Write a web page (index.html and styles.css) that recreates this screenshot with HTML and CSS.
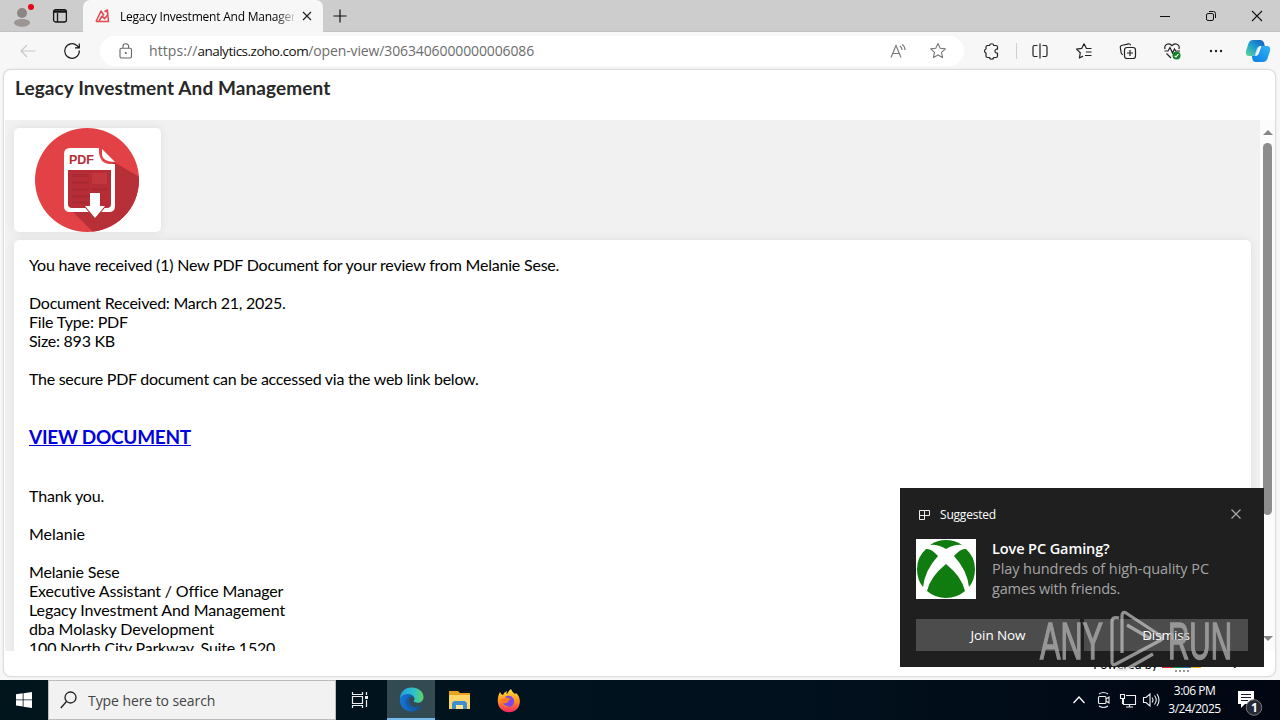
FILE: index.html
```html
<!DOCTYPE html>
<html lang="en">
<head>
<meta charset="utf-8">
<title>Legacy Investment And Management</title>
<link rel="stylesheet" href="styles.css">
</head>
<body>
<div class="desktop">
  <header class="titlebar">
    <div class="title-tools">
      <svg class="profile" width="24" height="26" viewBox="0 0 24 26"><circle cx="12" cy="11" r="5" fill="#8c8583"/><path d="M4 21c0-3 4-4 8-4s8 1 8 4c-2 5-14 5-16 0z" fill="#9c9593"/><circle cx="21" cy="5" r="3" fill="#e30613"/></svg>
      <svg class="tabs-icon" width="16" height="16" viewBox="0 0 16 16" fill="none" stroke="#161616" stroke-width="1.3"><rect x="1.6" y="1.6" width="12.8" height="12.4" rx="2"/><path d="M2 4h12M2 3h12M5.5 5v9"/></svg>
    </div>
    <div class="tab">
      <svg width="16" height="14" viewBox="0 0 16 14" fill="none" stroke="#e5484d" stroke-width="1.500" stroke-linejoin="round"><path d="M1 12.500 6 2l3 4.500M1 12.500h12.500L12.500 3"/><path d="m4 12 3.200-5 2.300 2.800L13 5.500M9.500 2.500 12.500 1v3"/></svg>
      <span class="tab-title">Legacy Investment And Manager</span>
      <svg class="tab-close" width="10" height="10" viewBox="0 0 10 10"><path d="m1 1 8 8m0-8-8 8" stroke="#222" stroke-width="1.200"/></svg>
    </div>
    <svg class="newtab" width="14" height="14" viewBox="0 0 14 14"><path d="M7 .5v13M.5 7h13" stroke="#111" stroke-width="1.200"/></svg>
    <div class="window-controls">
      <svg width="12" height="12" viewBox="0 0 12 12"><path d="M1 6.500h10" stroke="#111"/></svg>
      <svg width="12" height="12" viewBox="0 0 12 12" fill="none" stroke="#111"><rect x="1.500" y="3.500" width="7" height="7" rx="1.500"/><path d="M4 1.500h4.500q2 0 2 2V8"/></svg>
      <svg width="12" height="12" viewBox="0 0 12 12"><path d="m1 1 10 10m0-10L1 11" stroke="#111" stroke-width="1.100"/></svg>
    </div>
  </header>

  <nav class="toolbar">
    <svg class="back" width="16" height="14" viewBox="0 0 16 14" fill="none" stroke="#c8c8c8" stroke-width="1.200"><path d="M15.500 7H1m6-6L1 7l6 6"/></svg>
    <svg class="reload" width="18" height="18" viewBox="0 0 18 18" fill="none" stroke="#1b1b1b" stroke-width="1.200"><path d="M16.300 8.500A7.300 7.300 0 1 1 13.800 3.500L16 5.500M16.300 1.500v4.300H12"/></svg>
    <div class="address">
      <svg class="lock" width="14" height="16" viewBox="0 0 14 16" fill="none" stroke="#666" stroke-width="1.100"><rect x="1" y="5.200" width="11.500" height="9.800" rx="1.500"/><path d="M4 5V3.500a2.800 2.800 0 0 1 5.600 0V5"/><circle cx="6.800" cy="10" r=".5" fill="#555"/></svg>
      <span class="url">https://<b>analytics.zoho.com</b><span class="path">/open-view/3063406000000006086</span></span>
      <svg class="read" width="17" height="16" viewBox="0 0 17 16" fill="none" stroke="#777" stroke-width="1.100"><path d="m1 14.500 5-12 5 12M3 10.500h6M10 3q2 1.500 2 4M12.200 1.400Q15 3.500 15 7"/></svg>
      <svg class="fav" width="18" height="18" viewBox="0 0 18 18" fill="none" stroke="#777" stroke-width="1.100" stroke-linejoin="round"><path d="m9 1.500 2.200 4.800 5.200.6-3.900 3.500 1.100 5.200L9 13l-4.600 2.600 1.100-5.200-3.900-3.500 5.200-.6z"/></svg>
    </div>
    <div class="actions">
      <svg class="ext" width="18" height="18" viewBox="0 0 18 18" fill="none" stroke="#222" stroke-width="1.200" stroke-linejoin="round"><path d="M4.500 3.500h2a2.200 2.200 0 0 1 4.300 0H13q1.500 0 1.500 1.500v2.200h-1.200a2 2 0 0 0 0 3.800h1.200v3q0 1.500-1.500 1.500h-2.200a2.200 2.200 0 0 1-4.300 0h-2Q3 15.500 3 14v-3a2.100 2.100 0 0 1 0-4V5q0-1.500 1.500-1.500z"/></svg>
      <i class="divider"></i>
      <svg width="18" height="18" viewBox="0 0 18 18" fill="none" stroke="#222" stroke-width="1.200"><path d="M9 1.500v15M6.500 3.500H3.500q-1.500 0-1.500 1.500v8q0 1.500 1.500 1.500h3m5-11h3q1.500 0 1.500 1.500v8q0 1.500-1.500 1.500h-3"/></svg>
      <svg width="18" height="18" viewBox="0 0 18 18" fill="none" stroke="#222" stroke-width="1.200" stroke-linejoin="round"><path d="M16.500 6.500h-5L9 1.800 6.700 6.400l-5.200.7 3.800 3.600L4.400 16 8 14.100M11 10h5.500M10 13.500h6.500"/></svg>
      <svg width="18" height="18" viewBox="0 0 18 18" fill="none" stroke="#222" stroke-width="1.200"><rect x="5.500" y="5.500" width="11" height="11" rx="2.500"/><path d="M4 12.500q-1.500 0-1.800-1.500L1.300 5.500Q1 4 2.500 3.500l7-1.700q1.500-.3 2.100 1.600M11 8v6M8 11h6"/></svg>
      <svg width="19" height="18" viewBox="0 0 19 18" fill="none" stroke="#222" stroke-width="1.200"><path d="M2 7.200q-1-3.700 2-5 3-1 5 1.500 2-2.500 5-1.500 3 1.300 2 5M1.500 9H5l2-3.500L9.500 11l2-4 1.200 2H17M3.500 11.500 8 16"/><circle cx="13.500" cy="13.500" r="4" fill="#16812b" stroke="none"/><path d="m11.700 14 1.300 1 2.400-3" stroke="#fff"/></svg>
      <svg width="18" height="18" viewBox="0 0 18 18" fill="#222"><circle cx="3" cy="9" r="1.200"/><circle cx="8" cy="9" r="1.200"/><circle cx="13" cy="9" r="1.200"/></svg>
    </div>
    <svg class="copilot" width="26" height="24" viewBox="0 0 26 24">
      <defs><linearGradient id="ca" x1="0" y1="1" x2="1" y2="0"><stop offset="0" stop-color="#64d894"/><stop offset=".5" stop-color="#1c9ed0"/><stop offset="1" stop-color="#1756bd"/></linearGradient><linearGradient id="cb" x1="0" y1="1" x2="1" y2="0"><stop offset="0" stop-color="#087de6"/><stop offset="1" stop-color="#35b4f4"/></linearGradient></defs>
      <path d="M8 1h7q3 0 4 3l.8 3H16q-3 0-4 3l-1.500 4Q9.500 17 6.500 17H4q-4 0-3-5l2.300-7Q4.500 1 8 1z" fill="url(#ca)"/>
      <path d="M18 23h-7q-3 0-3.600-3L7 17q3 0 4-3l1.500-4Q13.500 7 16.500 7H22q4 0 3 5l-2.300 7Q21.500 23 18 23z" fill="url(#cb)"/><path d="M12.500 10q.8-2.700 3-3h1l-2.500 7q-.8 2.800-3 3h-1z" fill="#f4fbff"/>
    </svg>
  </nav>

  <main class="page">
    <h1 class="page-title"><span>Legacy Investment And Management</span></h1>
    <div class="viewport">
      <div class="dashboard">
        <div class="pdf-card">
          <svg width="104" height="104" viewBox="0 0 104 104">
            <defs><clipPath id="disc"><circle cx="52" cy="52" r="52"/></clipPath></defs>
            <g clip-path="url(#disc)"><path fill="#e24146" d="M0 0h104v104H0z"/><path fill="#b73038" d="m79 34 34 20v60H68L34 80z"/></g>
            <path d="M35 20h29v5q1 10 10 11h6V78q0 6-6 6H35q-6 0-6-6V26q0-6 6-6z" fill="#fff"/>
            <path d="M33 42h43v34q0 4-4 4H37q-4 0-4-4z" fill="#b72d35"/>
            <g fill="#aa2932"><path d="M37 46h17v3H37zM37 53h17v3H37zM37 60h17v3H37zM37 67h17v3H37zM37 73h17v3H37zM57 60h15v3H57z"/></g><path d="M57 45h15v11H57z" fill="#c2363e"/>
            <path d="M67 21 80 34q-12 0-13-7z" fill="#fff"/>
            <path d="M55 65h10v13h5L60 90 50 78h5z" fill="#fff" stroke="#b72d35" stroke-width="2" paint-order="stroke"/>
            <text x="34" y="36" textLength="25" lengthAdjust="spacingAndGlyphs" class="pdf-label">PDF</text>
          </svg>
        </div>
        <article class="message">
          <p><span class="l1">You have received (1) New PDF Document for your review from Melanie Sese.</span></p>
          <p><span class="l2">Document Received: March 21, 2025.</span><br>File Type: PDF<br><span class="l2">Size: 893 KB</span></p>
          <p><span class="l3">The secure PDF document can be accessed via the web link below.</span></p>
          <a class="view" href="#">VIEW DOCUMENT</a>
          <p>Thank you.</p>
          <p class="plain">Melanie</p>
          <p>Melanie Sese<br>Executive Assistant / Office Manager<br><span class="org">Legacy Investment And Management</span><br><span class="org">dba Molasky Development</span><br><span class="l1">100 North City Parkway, Suite 1520</span></p>
        </article>
      </div>
      <div class="scrollbar"><i class="up"></i><i class="thumb"></i><i class="down"></i></div>
    </div>
    <footer class="powered"><span>Powered by</span><svg width="42" height="13" viewBox="0 0 42 13" fill="none" stroke-width="2"><rect x="2" y="0" width="9" height="7" stroke="#e42527"/><rect x="13" y="0" width="7" height="7" stroke="#089949"/><rect x="22" y="0" width="7" height="7" stroke="#226db4"/><rect x="31" y="0" width="8" height="7" stroke="#f9b21d"/><path d="M14 11h16" stroke="#999" stroke-dasharray="2 2"/></svg><b>Analytics</b></footer>
  </main>

  <footer class="taskbar">
    <div class="start"><svg width="16" height="16" viewBox="0 0 16 16" fill="#fff"><path d="m0 2.300 6.700-1v6.200H0zM7.500 1.200 16 0v7.500H7.500zM0 8.300h6.700v6.200l-6.700-1zM7.500 8.300H16V16l-8.500-1.300z"/></svg></div>
    <div class="search"><svg width="17" height="18" viewBox="0 0 17 18" fill="none" stroke="#222" stroke-width="1.300"><circle cx="10.500" cy="6.500" r="5.500"/><path d="M6.500 10.500.8 17"/></svg><span>Type here to search</span></div>
    <div class="task"><svg width="18" height="18" viewBox="0 0 18 18" fill="none" stroke="#eee" stroke-width="1.200"><path d="M1.500 1v2.500h10V1M1.500 17v-2.500h10V17M1.500 5.500h10v7h-10zM15.500 1v3m0 5v7"/><path d="M14 5h3v3h-3z" fill="#eee" stroke="none"/></svg></div>
    <div class="task active"><svg width="25" height="25" viewBox="0 0 25 25"><defs><linearGradient id="ea"><stop stop-color="#239fe5"/><stop offset=".6" stop-color="#2cc1cb"/><stop offset="1" stop-color="#62d45d"/></linearGradient><linearGradient id="eb"><stop stop-color="#1676d2"/><stop offset="1" stop-color="#0c4f9b"/></linearGradient></defs><path d="M1 12C1 5 6 .5 12.500.5 20 .5 24.500 5 24.500 10c0 5-5 7-9 5-2-1 .5-2 0-4C14 7 5 6 1 12z" fill="url(#ea)"/><path d="M1 11C4 6 13 6 15 10c-4-1-6 2-5 5 1 5 7 7 13 3-2 4-6 6.500-10.500 6.500C5 24.500 0 19 1 11z" fill="url(#eb)"/><path d="M8 11c2-2 5-2 7-1-4-1-6 2-5 5 1 4 5 6 9 5-3 3-8 2-11-1-2-3-2-6 0-8z" fill="#145caa"/></svg></div>
    <div class="task"><svg width="22" height="20" viewBox="0 0 22 20"><path d="M0 1h9l2 2h10v15H0z" fill="#e7a51f"/><path d="M0 5h21v14H0z" fill="#ffd66a"/><path d="M3 19v-6l2-2h11l2 2v6h-4v-4H7v4z" fill="#4190ce"/><path d="M7 15h7v4H7z" fill="#ffe491"/></svg></div>
    <div class="task"><svg width="24" height="25" viewBox="0 0 24 25"><defs><linearGradient id="fa" x2="0" y2="1"><stop stop-color="#ffe33e"/><stop offset=".5" stop-color="#ff9420"/><stop offset="1" stop-color="#f52363"/></linearGradient></defs><path d="M3 4q1 3 3 3 1-3 4-4-1 2 0 3 2-4 4-5 1 3 4 5l1-1c5 4 5 12 1 16-5 5-13 4-17-1-3-4-3-11 0-16z" fill="url(#fa)"/><path d="M8 9q2-2 6-1 4 3 3 7-2 5-8 4-4-2-3-6 2 1 4-1 1-2-2-3z" fill="#8047dc"/><path d="M3 12q5-4 11-1-3 1-3 3-2 2-5 1 2 4 7 3-6 4-10-6z" fill="#ff7b22"/></svg></div>
    <div class="tray">
      <svg width="14" height="10" viewBox="0 0 14 10" fill="none" stroke="#fff" stroke-width="1.300"><path d="m1.500 8 5.500-6 5.500 6"/></svg>
      <svg width="14" height="18" viewBox="0 0 14 18" fill="none" stroke="#eee" stroke-width="1.100"><rect x="1.500" y="5.500" width="7.500" height="7" rx="1"/><path d="m9 8 3-2v6l-3-2M2 3q4.500-3 9 0M2 15q4.500 3 9 0"/></svg>
      <svg width="18" height="16" viewBox="0 0 18 16" fill="none" stroke="#eee" stroke-width="1.100"><path d="M4.500 7v5.500h12v-9H7M10.500 13v2M7 15h7M1.500 2.500h4v4h-4zM3.500 7v5"/></svg>
      <svg width="18" height="16" viewBox="0 0 18 16" fill="none" stroke="#eee" stroke-width="1.100"><path d="M1.500 5.500H4L8 2v12l-4-3.500H1.500zM10 5.500q2 2.500 0 5M12.500 3.500q3.500 4.500 0 9M15 2q4 6 0 12"/></svg>
      <div class="clock"><span>3:06 PM</span><span>3/24/2025</span></div>
      <svg class="notice" width="28" height="28" viewBox="0 0 28 28"><path d="M2 3h16v13H9l-4 4v-4H2z" fill="#fff"/><path d="M5 6.500h10M5 9.500h10M5 12.500h7" stroke="#171c2d"/><circle cx="18" cy="19.500" r="7.800" fill="#252a36" stroke="#777"/><text x="15" y="24" class="badge">1</text></svg>
    </div>
  </footer>

  <aside class="toast">
    <div class="toast-head"><svg width="13" height="13" viewBox="0 0 13 13" fill="none" stroke="#eee" stroke-width="1"><path d="M1.500 2.500h5v9h-5zM1.500 7.500h10v-5h-5v5"/></svg><span>Suggested</span><svg class="dismiss-x" width="12" height="12" viewBox="0 0 12 12"><path d="m1.500 1.500 9 9m0-9-9 9" stroke="#aaa" stroke-width="1.200"/></svg></div>
    <div class="toast-body">
      <svg width="60" height="60" viewBox="0 0 60 60"><path fill="#fff" d="M0 0h60v60H0z"/><g fill="#107c10"><path d="M14 6Q21 1 30 1t16 5q-7-1-16 4Q21 5 14 6z"/><path d="M10 10q5-1 12 7Q9 31 7 48 1 41 1 30 1 18 10 10zM50 10q-5-1-12 7 13 14 15 31 6-7 6-18 0-12-9-20z"/><path d="M30 25q16 13 19 27-8 7-19 7t-19-7q3-14 19-27z"/></g></svg>
      <div class="toast-copy"><strong>Love PC Gaming?</strong><span class="t1">Play hundreds of high-quality PC</span><span class="t2">games with friends.</span></div>
    </div>
    <div class="toast-actions"><button>Join Now</button><button>Dismiss</button></div>
  </aside>

  <svg class="watermark" width="200" height="64" viewBox="0 0 200 64">
    <text x="5" y="50" textLength="63" lengthAdjust="spacingAndGlyphs">ANY</text><text x="133" y="50" textLength="64" lengthAdjust="spacingAndGlyphs">RUN</text>
    <path d="M84 9q-7-2-7 4v40q0 4 4 2l45-24q3-2 0-4L91 4q-4-2-4 3v37M92 16l24 14M81 60l9 1 28-16" fill="none" stroke="#dedede" stroke-opacity=".6" stroke-width="3.200" stroke-linejoin="round"/>
  </svg>
</div>
</body>
</html>
```
FILE: styles.css
```css
* { box-sizing: border-box; }
body { margin: 0; font-family: "Noto Sans", sans-serif; overflow: hidden; }
svg { display: block; flex: none; }
.desktop { position: relative; width: 1280px; height: 720px; background: #f7f7f7; display: flex; flex-direction: column; overflow: hidden; }
.titlebar { height: 32px; background: #cdcdcd; display: flex; flex: none; align-items: center; border-bottom: 1px solid #c2c2c2; }
.title-tools { width: 83px; display: flex; align-items: center; padding-left: 10px; gap: 18px; height: 32px; }
.profile { margin-top: -1px; }
.tab { align-self: flex-start; width: 240px; height: 32px; background: #f7f7f7; border-radius: 7px 7px 0 0; display: flex; align-items: center; padding-left: 12px; flex: none; }
.tab-title { font-family: "Open Sans", sans-serif; font-size: 12px; letter-spacing: -.22px; color: #000; margin-left: 9px; width: 174px; overflow: hidden; white-space: nowrap; mask-image: linear-gradient(90deg, #000 155px, transparent 178px); }
.tab-close { margin-left: 8px; }
.newtab { margin-left: 10px; }
.window-controls { margin-left: auto; display: flex; gap: 34px; padding-right: 17px; }
.toolbar { height: 37px; flex: none; display: flex; align-items: center; padding-left: 20px; }
.reload { margin-left: 27px; }
.address { width: 864px; height: 30px; border-radius: 15px; background: #fff; margin-left: 19px; display: flex; align-items: center; padding: 0 17px 0 19px; flex: none; }
.url { margin-left: 16px; font-family: "Open Sans", sans-serif; font-size: 14px; letter-spacing: .08px; color: #6c6c6c; white-space: nowrap; }
.url b { color: #111; font-weight: 400; font-size: 13.500px; letter-spacing: -.49px; }
.path { letter-spacing: -.12px; }
.read { margin-left: auto; }
.fav { margin-left: 22px; }
.actions { display: flex; align-items: center; gap: 26px; margin-left: 19px; }
.ext { margin-right: -11px; }
.divider { width: 1px; height: 16px; background: #d0d0d0; margin-right: -12px; }
.copilot { margin-left: 19px; }
.page { width: 1273px; height: 608px; margin-left: 3px; border: 1px solid #ddd; border-radius: 8px; background: #fff; box-shadow: 0 0 2px #ddd; flex: none; overflow: hidden; padding-left: 1px; }
.page-title { height: 50px; margin: 0; padding: 5px 10px; font: 700 19px/25px Lato, sans-serif; letter-spacing: .1px; color: #282828; white-space: nowrap; }
.viewport { display: flex; height: 531px; }
.dashboard { width: 1255px; background: #f1f1f1; padding: 8px 9px 0; overflow: hidden; }
.pdf-card { width: 147px; height: 104px; background: #fff; border-radius: 5px; display: flex; padding-left: 21px; box-shadow: 0 0 8px #ddd; }
.pdf-label { font: bold 12px "Liberation Sans", sans-serif; fill: #b72d35; }
.message { height: 550px; margin-top: 8px; background: #fff; border-radius: 5px; padding: 15px; box-shadow: 0 0 8px #ddd; font: 16px/19px Lato, sans-serif; letter-spacing: -.17px; color: #000; white-space: nowrap; }
.message p { margin: 0 0 19px; }
.message .plain { letter-spacing: 0; }
.message .org { letter-spacing: -.09px; }
.message .l1 { letter-spacing: -.21px; }
.message .l2 { letter-spacing: -.25px; }
.message .l3 { letter-spacing: -.27px; }
.message .view { display: block; width: max-content; margin: 38px 0; font-size: 19px; line-height: 22px; letter-spacing: -.28px; font-weight: 700; color: #0000e0; text-decoration: underline; text-decoration-thickness: 1px; }
.scrollbar { width: 15px; background: #fcfcfc; display: flex; flex-direction: column; align-items: center; padding: 10px 0; }
.up { border: 5px solid transparent; border-top: 0; border-bottom-color: #858585; }
.thumb { width: 9px; height: 372px; margin-top: 8px; border-radius: 5px; background: #8d8d8d; }
.down { border: 5px solid transparent; border-bottom: 0; border-top-color: #858585; margin-top: auto; }
.powered { display: flex; align-items: center; justify-content: flex-end; height: 22px; padding-right: 15px; font: 12.500px/16px Lato, sans-serif; gap: 3px; }
.powered span { margin-top: 5px; }
.powered svg { margin-top: 9px; }
.powered b { font-size: 13px; width: 54px; margin-top: -2px; }
.taskbar { height: 40px; background: linear-gradient(90deg, #01151d, #01121e 60%, #010612); display: flex; margin-top: auto; flex: none; }
.start, .task { width: 48px; display: flex; align-items: center; justify-content: center; flex: none; }
.task { width: 49px; }
.task:nth-child(3) { width: 51px; padding-right: 3px; }
.task.active { width: 48px; }
.search { width: 288px; flex: none; background: #f2f2f2; border: 1px solid #bbb; display: flex; align-items: center; padding-left: 11px; gap: 11px; color: #444; font: 14px "Open Sans", sans-serif; letter-spacing: -.08px; }
.active { background: #344a53; border-bottom: 2px solid #76b9ed; }
.tray { margin-left: auto; display: flex; align-items: center; gap: 8px; width: 208px; color: #fff; }
.tray > svg:nth-child(2) { margin-left: 3px; }
.tray > svg:nth-child(4) { margin-left: -3px; }
.clock { width: 55px; display: flex; flex-direction: column; align-items: center; font: 12px/18px "Open Sans", sans-serif; letter-spacing: -.5px; margin-left: -1px; }
.clock, .clock + svg { flex: none; }
.notice { margin: 4px 0 0 6px; }
.badge { font: bold 12px "Open Sans", sans-serif; fill: #fff; }
.toast { position: absolute; left: 900px; top: 488px; width: 364px; height: 179px; background: #1f1f1f; color: #fff; padding: 16px; font-family: "Open Sans", sans-serif; }
.toast-head { display: flex; align-items: center; height: 21px; padding-left: 2px; font-size: 12px; }
.toast-head span { margin-left: 9px; letter-spacing: -.2px; }
.dismiss-x { margin: -2px 6px 0 auto; }
.toast-body { display: flex; margin-top: 14px; gap: 16px; height: 60px; }
.toast-copy { display: flex; flex-direction: column; font-size: 15px; line-height: 20px; color: #a5a5a5; white-space: nowrap; }
.toast-copy strong { color: #fff; font-weight: 600; font-size: 14.500px; letter-spacing: -.1px; }
.toast-copy span { font-size: 14.500px; letter-spacing: -.07px; }
.toast-copy .t2 { letter-spacing: -.2px; }
.toast-actions { display: grid; grid-template-columns: 1fr 1fr; gap: 4px; margin-top: 20px; }
.toast-actions button { height: 32px; border: 0; padding: 0; background: #4c4c4c; color: #fff; font: 13.500px "Open Sans", sans-serif; letter-spacing: -.1px; }
.watermark { position: absolute; left: 1035px; top: 609px; }
.watermark text { font: 51px "Liberation Sans", sans-serif; fill: #aaa; stroke: #aaa; stroke-width: 1.500px; opacity: .8; }
```
